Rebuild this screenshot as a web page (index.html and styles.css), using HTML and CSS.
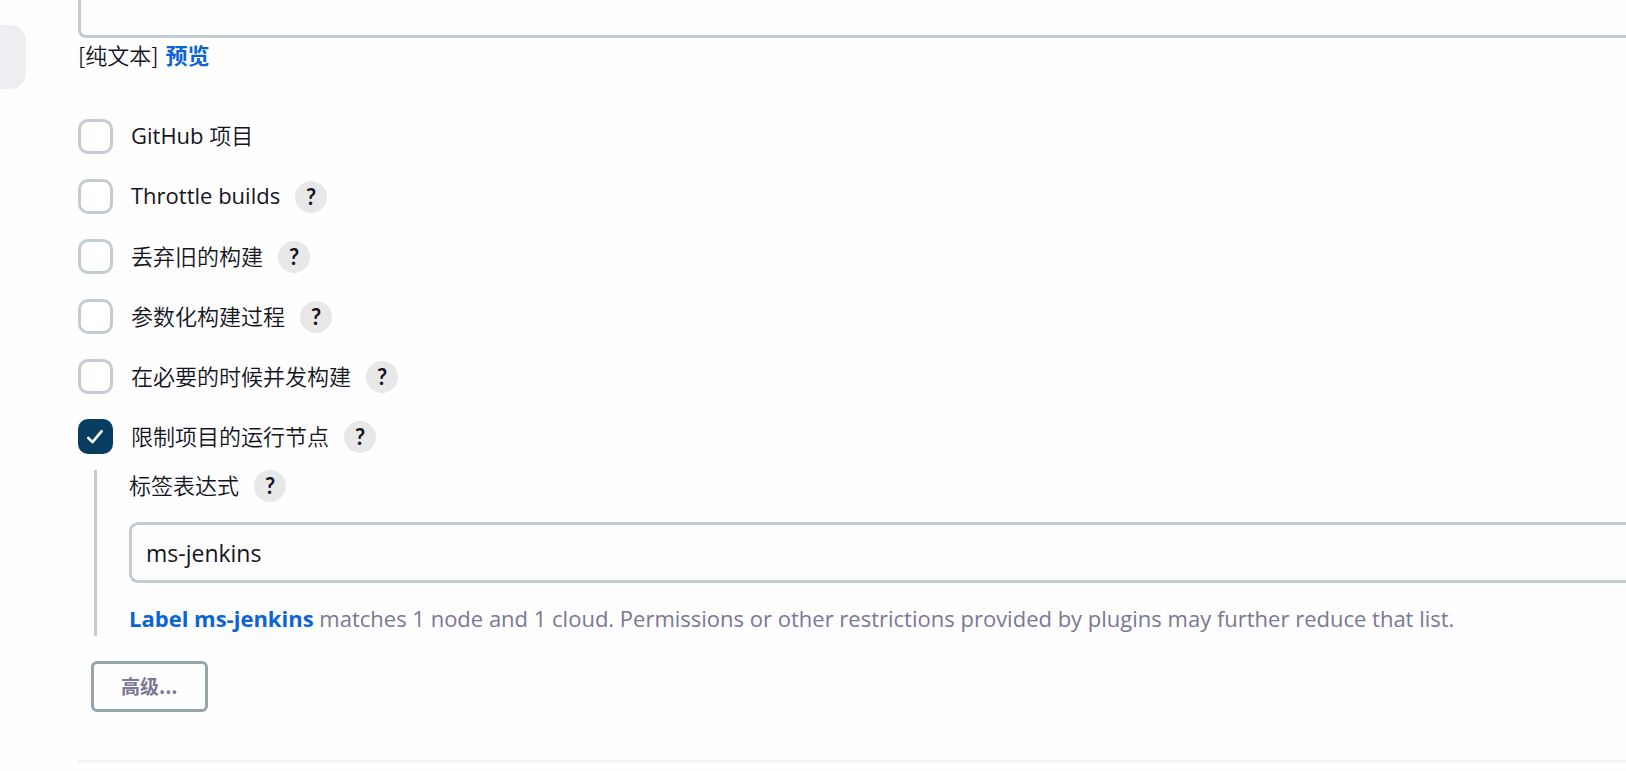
FILE: index.html
```html
<!DOCTYPE html>
<html lang="zh-CN">
<head>
<meta charset="utf-8">
<title>Jenkins</title>
<link rel="stylesheet" href="styles.css">
</head>
<body>
<div class="page">
  <aside class="side"><div class="side-item"></div></aside>
  <main class="main">
    <textarea class="description" aria-label="描述"></textarea>
    <div class="markup"><span>[纯文本]</span><a class="link" href="#">预览</a></div>

    <div class="options">
      <div class="option">
        <input class="check" type="checkbox" id="github"><label for="github"><span class="latin">GitHub </span>项目</label>
      </div>
      <div class="option">
        <input class="check" type="checkbox" id="throttle"><label for="throttle" class="latin">Throttle builds</label>
        <button class="help" type="button">?</button>
      </div>
      <div class="option">
        <input class="check" type="checkbox" id="discard"><label for="discard">丢弃旧的构建</label>
        <button class="help" type="button">?</button>
      </div>
      <div class="option">
        <input class="check" type="checkbox" id="params"><label for="params">参数化构建过程</label>
        <button class="help" type="button">?</button>
      </div>
      <div class="option">
        <input class="check" type="checkbox" id="concurrent"><label for="concurrent">在必要的时候并发构建</label>
        <button class="help" type="button">?</button>
      </div>
      <div class="option">
        <span class="check-wrap">
          <input class="check" type="checkbox" id="restrict" checked>
          <svg class="tick" viewBox="0 0 35 35" aria-hidden="true"><path d="M10.3 19l4.2 4.2 9.2-11"/></svg>
        </span><label for="restrict">限制项目的运行节点</label>
        <button class="help" type="button">?</button>
      </div>
    </div>

    <section class="nested">
      <div class="nested-head">
        <label for="expression">标签表达式</label>
        <button class="help" type="button">?</button>
      </div>
      <input class="field" type="text" id="expression" value="ms-jenkins">
      <p class="hint"><a class="link" href="#">Label ms-jenkins</a> matches 1 node and 1 cloud. Permissions or other restrictions provided by plugins may further reduce that list.</p>
    </section>

    <button class="advanced" type="button">高级...</button>
    <hr class="rule">
  </main>
</div>
</body>
</html>
```
FILE: styles.css
```css
* { box-sizing: border-box; }

body {
  margin: 0;
  background: #fefefe;
  color: #14141f;
  font-family: "Noto Sans CJK SC", sans-serif;
  font-size: 22px;
  font-weight: 350;
  line-height: 32px;
}

.page {
  display: flex;
  min-height: 100vh;
  overflow: hidden;
}

.side { flex: 0 0 26px; padding-top: 25px; }

.side-item {
  height: 64px;
  border-radius: 0 16px 16px 0;
  background: #eeedf2;
}

.main { flex: 1; min-width: 0; padding-left: 52px; }

.latin, .field, .hint {
  font-family: "Open Sans", "Noto Sans", sans-serif;
  font-weight: 400;
}

.description {
  display: block;
  width: 100%;
  height: 38px;
  border: solid #c3ccd1;
  border-width: 0 0 3px 3px;
  border-radius: 0 0 0 8px;
  background: #fefefe;
  resize: none;
  outline: 0;
}

.markup { display: flex; gap: 7px; }

.link {
  color: #0b64d6;
  font-weight: 700;
  text-decoration: none;
}

.options {
  display: flex;
  flex-direction: column;
  gap: 25px;
  margin-top: 49px;
}

.option, .nested-head { display: flex; align-items: center; }
.option { height: 35px; }
.option label, .nested-head label { padding-bottom: 3px; line-height: 29px; }

.check {
  appearance: none;
  display: block;
  width: 35px;
  height: 35px;
  margin: 0 18px 0 0;
  border: 3px solid #c3ccd1;
  border-radius: 10px;
  background: #fff;
}

.check:checked { border-color: #083d61; background: #083d61; }

.check-wrap { position: relative; }

.tick {
  position: absolute;
  top: 0;
  left: 0;
  width: 35px;
  height: 35px;
  fill: none;
  stroke: #fff;
  stroke-width: 2.6;
  stroke-linecap: round;
  stroke-linejoin: round;
  pointer-events: none;
}

.help {
  width: 32px;
  height: 32px;
  margin-left: 15px;
  padding: 0;
  border: 0;
  border-radius: 50%;
  background: #e8e8e8;
  color: #14141f;
  font: 700 22px/32px Lato, sans-serif;
}

.nested {
  margin: 16px 0 0 16px;
  padding-left: 32px;
  border-left: 3px solid #c3ccd1;
}

.field {
  display: block;
  width: 100%;
  height: 61px;
  margin-top: 20px;
  padding: 0 14px;
  border: solid #c3ccd1;
  border-width: 3px 0 3px 3px;
  border-radius: 9px 0 0 9px;
  background: #fefefe;
  color: #14141f;
  font-size: 23px;
  outline: 0;
}

.hint {
  margin: 0;
  padding: 19px 0 2px;
  color: #7a7892;
  white-space: nowrap;
}

.advanced {
  display: block;
  height: 51px;
  margin: 25px 0 0 13px;
  padding: 0 27px 2px;
  border: 3px solid #98a4ac;
  border-radius: 6px;
  background: transparent;
  color: #7a7892;
  font: 700 19px/32px "Noto Sans CJK SC", sans-serif;
}

.rule {
  height: 3px;
  margin: 48px 0 0;
  border: 0;
  background: #f3f3f8;
}
```
